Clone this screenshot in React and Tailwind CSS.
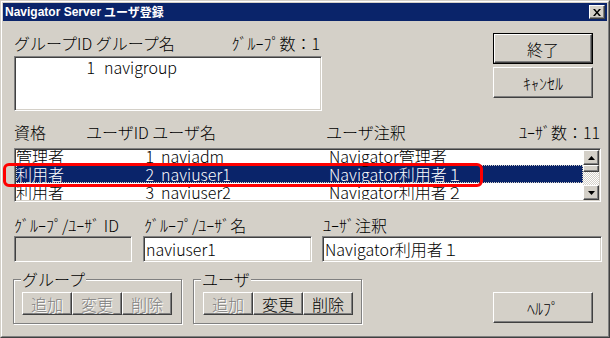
import React from "react";

const raised =
  "border border-t-white border-l-white border-r-[#404040] border-b-[#404040] shadow-[inset_-1px_-1px_0_#808080] bg-[#d4d0c8]";
const sunken =
  "border border-t-[#808080] border-l-[#808080] border-r-white border-b-white shadow-[inset_1px_1px_0_#404040,inset_-1px_-1px_0_#d4d0c8]";

function Button({ label, className = "", disabled = false }) {
  return (
    <div
      className={`${raised} flex items-center justify-center leading-none ${
        disabled ? "text-[#808080] [text-shadow:1px_1px_0_#fff]" : "text-black"
      } ${className}`}
    >
      {label}
    </div>
  );
}

function GroupBox({ title, children, className = "" }) {
  return (
    <div className={`relative w-[169px] h-[45px] border border-[#808080] shadow-[inset_1px_1px_0_#fff,1px_1px_0_#fff] ${className}`}>
      <span className="absolute -top-[11px] left-[7px] bg-[#d4d0c8] px-[1px] leading-[20px]">{title}</span>
      {children}
    </div>
  );
}

function Arrow({ up }) {
  return (
    <svg width="7" height="4" viewBox="0 0 7 4">
      <polygon points={up ? "3.5,0 7,4 0,4" : "0,0 7,0 3.5,4"} fill="#000" />
    </svg>
  );
}

const users = [
  { role: "管理者", id: 1, name: "naviadm", note: "Navigator管理者" },
  { role: "利用者", id: 2, name: "naviuser1", note: "Navigator利用者１", selected: true },
  { role: "利用者", id: 3, name: "naviuser2", note: "Navigator利用者２" },
];

export default function App() {
  return (
    <div className="w-[610px] h-[338px] bg-[#d4d0c8] border border-t-[#d4d0c8] border-l-[#d4d0c8] border-r-[#404040] border-b-[#404040] font-['Noto_Sans_CJK_JP',sans-serif] font-light text-[16px] text-black overflow-hidden">
      <div className="h-full border border-t-white border-l-white border-r-[#808080] border-b-[#808080] p-[1px] flex flex-col">
        {/* Title bar */}
        <div className="h-[18px] bg-[#0a246a] flex items-center justify-between pl-[2px] pr-[2px] text-white font-bold">
          <div className="flex items-center leading-none">
            <span className="font-['Liberation_Sans',sans-serif] text-[12px]">Navigator Server</span>
            <span className="ml-[3px] text-[12px]">ユーザ登録</span>
          </div>
          <div className={`${raised} w-[16px] h-[14px] flex items-center justify-center`}>
            <svg width="8" height="7" viewBox="0 0 8 7">
              <path d="M0 0h2l2 2.5L6 0h2L5 3.5 8 7H6L4 4.5 2 7H0l3-3.5z" fill="#000" />
            </svg>
          </div>
        </div>

        <div className="flex-1 pl-[11px]">
          {/* Group section */}
          <div className="mt-[12px] flex">
            <div className="w-[308px]">
              <div className="h-[20px] flex items-center justify-between pr-[2px] leading-none">
                <span>グループID グループ名</span>
                <span>ｸﾞﾙｰﾌﾟ数：1</span>
              </div>
              <div className={`${sunken} mt-[3px] h-[55px] bg-white pt-[1px]`}>
                <div className="flex h-[18px] items-center leading-none">
                  <span className="w-[80px] text-right">1</span>
                  <span className="ml-[9px]">navigroup</span>
                </div>
              </div>
            </div>
            <div className="ml-[171px] w-[100px]">
              <div className="border border-black">
                <Button label="終了" className="h-[29px]" />
              </div>
              <Button label="ｷｬﾝｾﾙ" className="mt-[3px] h-[31px]" />
            </div>
          </div>

          {/* User list header */}
          <div className="mt-[11px] h-[20px] w-[586px] flex items-center leading-none">
            <span className="w-[72px]">資格</span>
            <span className="w-[240px]">ユーザID ユーザ名</span>
            <span className="flex-1">ユーザ注釈</span>
            <span>ﾕｰｻﾞ数：11</span>
          </div>

          {/* User list */}
          <div className="relative mt-[6px] w-[587px] h-[54px]">
            <div className={`${sunken} h-full bg-white flex p-[1px]`}>
              <div className="flex-1 overflow-hidden">
                <div className="-mt-[3px]">
                  {users.map((u) => (
                    <div
                      key={u.id}
                      className={`h-[18px] flex items-center leading-none ${
                        u.selected
                          ? "bg-[#0a246a] text-white outline outline-1 outline-dotted outline-[#d4d0c8] -outline-offset-1"
                          : ""
                      }`}
                    >
                      <span className="w-[112px]">{u.role}</span>
                      <span className="w-[26px] text-right">{u.id}</span>
                      <span className="ml-[7px] w-[168px]">{u.name}</span>
                      <span>{u.note}</span>
                    </div>
                  ))}
                </div>
              </div>
              <div className="w-[16px] flex flex-col">
                <div className={`${raised} h-[15px] flex items-center justify-center`}>
                  <Arrow up />
                </div>
                <div className={`${raised} h-[7px]`} />
                <div className="flex-1 bg-[repeating-conic-gradient(#fff_0_25%,#d4d0c8_0_50%)] bg-[length:2px_2px]" />
                <div className={`${raised} h-[15px] flex items-center justify-center`}>
                  <Arrow />
                </div>
              </div>
            </div>
            <div className="absolute left-[-11px] top-[15px] w-[480px] h-[24px] border-[3px] border-[#ff0000] rounded-[6px]" />
          </div>

          {/* Edit fields */}
          <div className="mt-[12px] h-[22px] flex items-center leading-none">
            <span className="w-[130px]">ｸﾞﾙｰﾌﾟ/ﾕｰｻﾞ ID</span>
            <span className="w-[179px]">ｸﾞﾙｰﾌﾟ/ﾕｰｻﾞ名</span>
            <span>ﾕｰｻﾞ注釈</span>
          </div>
          <div className="flex">
            <div className={`${sunken} w-[118px] h-[26px] bg-[#d4d0c8]`} />
            <div className={`${sunken} ml-[11px] w-[169px] h-[26px] bg-white flex items-center pl-[2px] leading-none`}>
              naviuser1
            </div>
            <div className={`${sunken} ml-[10px] w-[280px] h-[26px] bg-white flex items-center pl-[2px] leading-none`}>
              Navigator利用者１
            </div>
          </div>

          {/* Action groups */}
          <div className="mt-[17px] flex items-start">
            <GroupBox title="グループ" className="-ml-[1px]">
              <div className="flex pl-[8px] pt-[12px]">
                <Button label="追加" disabled className="w-[50px] h-[23px]" />
                <Button label="変更" disabled className="w-[50px] h-[23px]" />
                <Button label="削除" disabled className="w-[50px] h-[23px]" />
              </div>
            </GroupBox>
            <GroupBox title="ユーザ" className="ml-[11px]">
              <div className="flex pl-[9px] pt-[12px]">
                <Button label="追加" disabled className="w-[50px] h-[23px]" />
                <Button label="変更" className="w-[50px] h-[23px]" />
                <Button label="削除" className="w-[50px] h-[23px]" />
              </div>
            </GroupBox>
            <Button label="ﾍﾙﾌﾟ" className="ml-[131px] mt-[13px] w-[100px] h-[31px]" />
          </div>
        </div>
      </div>
    </div>
  );
}
